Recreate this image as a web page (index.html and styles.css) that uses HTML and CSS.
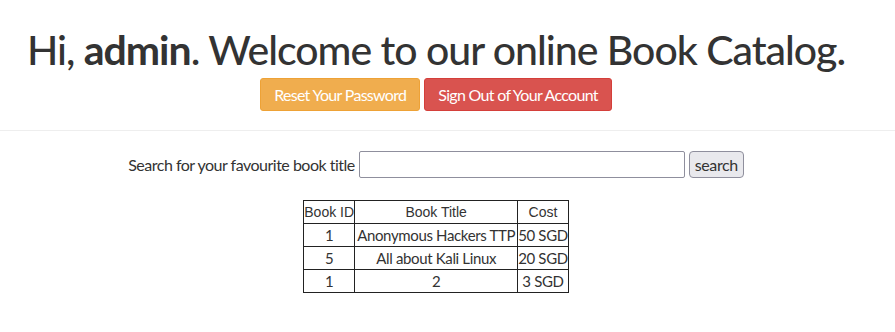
FILE: index.html
```html
<!DOCTYPE html>
<html lang="en">
<head>
  <meta charset="UTF-8">
  <meta name="viewport" content="width=device-width, initial-scale=1.0">
  <title>Book Catalog</title>
  <link rel="stylesheet" href="styles.css">
</head>
<body>
  <div class="page-header">
    <div class="inner">
      <h1>Hi, <b>admin</b>. Welcome to our online Book Catalog.</h1>
      <p class="actions">
        <a href="#" class="btn btn-warning">Reset Your Password</a>
        <a href="#" class="btn btn-danger">Sign Out of Your Account</a>
      </p>
    </div>
  </div>
  <div class="inner">
    <form class="search" action="#">
      <label for="title">Search for your favourite book title</label>
      <input type="text" id="title" name="title">
      <button type="submit">search</button>
    </form>
    <table class="books">
      <tr>
        <th class="col-id">Book ID</th>
        <th class="col-title">Book Title</th>
        <th class="col-cost">Cost</th>
      </tr>
      <tr><td>1</td><td>Anonymous Hackers TTP</td><td>50 SGD</td></tr>
      <tr><td>5</td><td>All about Kali Linux</td><td>20 SGD</td></tr>
      <tr><td>1</td><td>2</td><td>3 SGD</td></tr>
    </table>
  </div>
</body>
</html>
```

FILE: styles.css
```css
body {
  margin: 0;
  font-family: Lato, "Liberation Sans", sans-serif;
  font-size: 16px;
  color: #333;
  text-align: center;
}

.inner {
  padding-right: 23px;
}

.page-header {
  padding-top: 28px;
  border-bottom: 1px solid #eee;
  padding-bottom: 19px;
}

h1 {
  margin: 0;
  font-size: 41px;
  font-weight: 500;
  line-height: 44px;
  letter-spacing: -1px;
}

h1 b {
  font-weight: 700;
}

.actions {
  margin: 6px 0 0;
  display: flex;
  justify-content: center;
  gap: 4px;
}

.btn {
  display: inline-block;
  height: 33px;
  padding: 0 13px;
  border-radius: 3px;
  color: #fff;
  text-decoration: none;
  font-size: 16px;
  letter-spacing: -0.7px;
  box-sizing: border-box;
  line-height: 31px;
}

.btn-warning {
  background-color: #f0ad4e;
  border: 1px solid #eea236;
}

.btn-danger {
  background-color: #d9534f;
  border: 1px solid #d43f3a;
}

.search {
  margin-top: 20px;
  display: flex;
  justify-content: center;
  align-items: center;
  gap: 4px;
}

.search label {
  letter-spacing: -0.5px;
}

.search input {
  width: 326px;
  height: 27px;
  box-sizing: border-box;
  border: 1px solid #8f8f9d;
  border-radius: 2px;
  margin: 0;
}

.search button {
  height: 27px;
  width: 55px;
  box-sizing: border-box;
  background-color: #e9e9ed;
  border: 1px solid #8f8f9d;
  border-radius: 4px;
  font-family: Lato, sans-serif;
  font-size: 16px;
  letter-spacing: -0.4px;
  color: #333;
  padding: 0;
}

.books {
  margin: 22px auto 0;
  border-collapse: collapse;
  font-size: 15px;
  letter-spacing: -0.35px;
  white-space: nowrap;
}

.books th,
.books td {
  border: 1px solid #222;
  padding: 0;
  height: 22px;
  line-height: 21px;
  font-weight: normal;
}

.books th {
  font-family: "Liberation Sans", Arial, sans-serif;
  font-size: 14px;
  letter-spacing: 0;
}

.col-id { width: 50px; }
.col-title { width: 162px; }
.col-cost { width: 47px; }
```
